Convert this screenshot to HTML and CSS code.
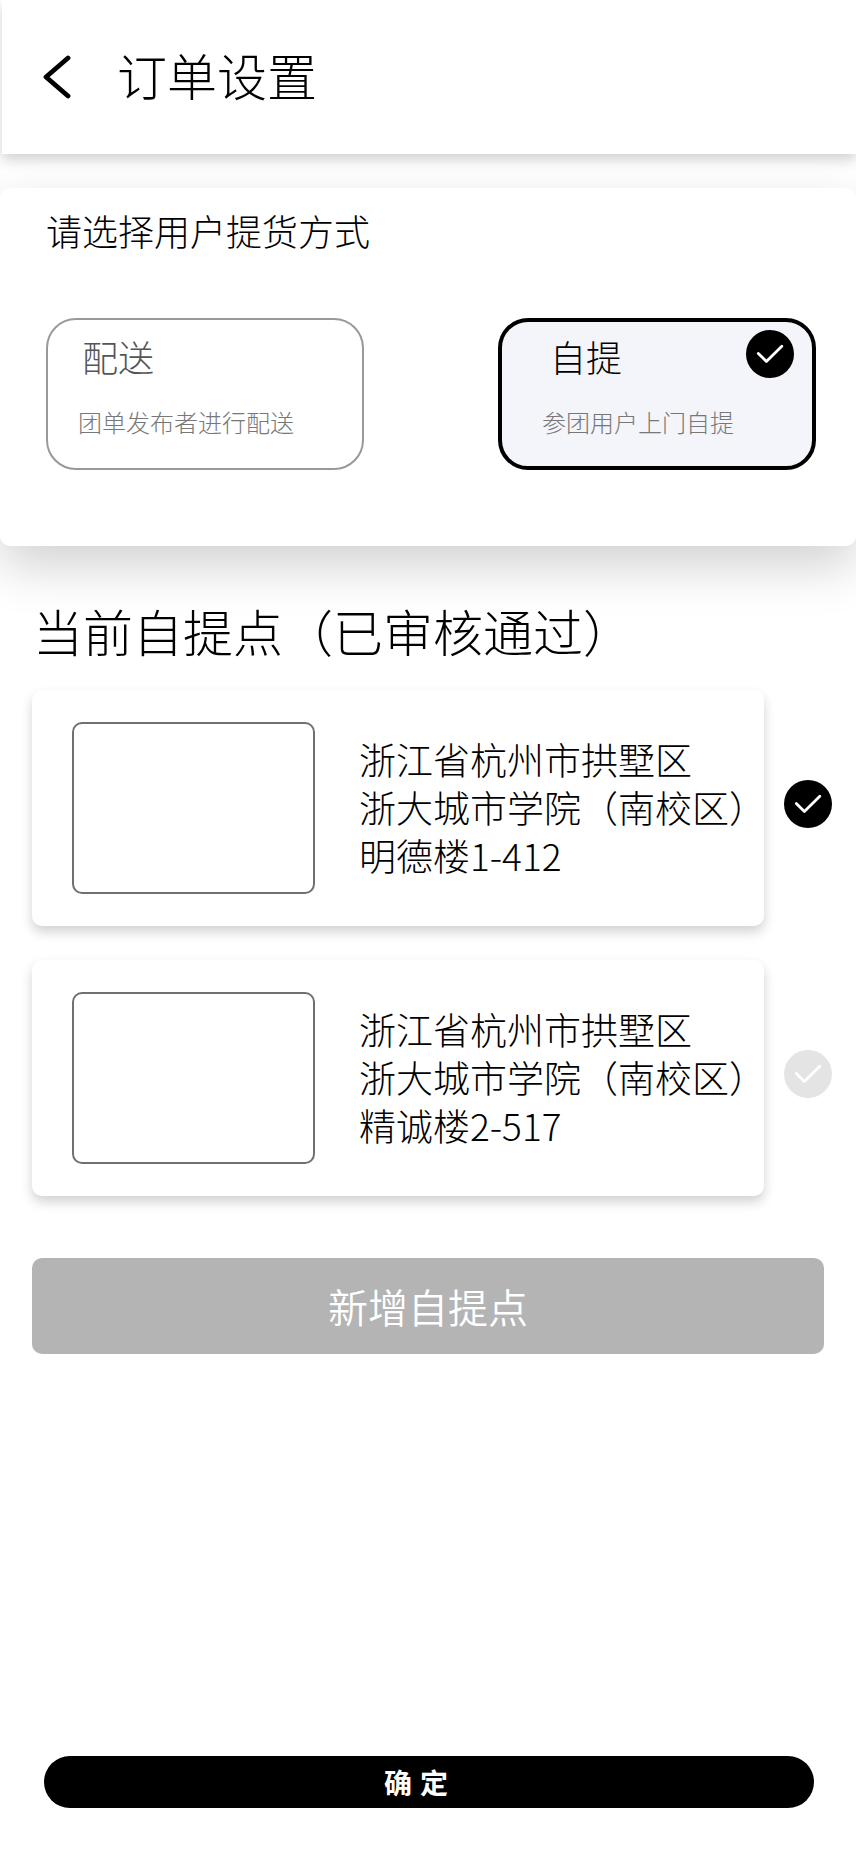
FILE: index.html
```
<!DOCTYPE html>
<html lang="zh-CN">
<head>
<meta charset="utf-8">
<meta name="viewport" content="width=device-width, initial-scale=1">
<title>订单设置</title>
<link rel="stylesheet" href="styles.css">
</head>
<body>
<svg class="defs" aria-hidden="true">
  <symbol id="tick" viewBox="0 0 48 48">
    <circle cx="24" cy="24" r="24" fill="currentColor"/>
    <path d="M12.3 23.4 20.4 31.5 35.8 16.3" fill="none" stroke="#fff" stroke-width="2.8" stroke-linecap="round" stroke-linejoin="round"/>
  </symbol>
</svg>
<header class="header">
  <button class="back" type="button" aria-label="返回">
    <svg class="back-icon" viewBox="0 0 28 44"><path d="M25 3 3 22 25 41" fill="none" stroke="#000" stroke-width="4.8" stroke-linecap="round" stroke-linejoin="round"/></svg>
  </button>
  <h1 class="title">订单设置</h1>
</header>
<main class="main">
  <section class="method">
    <h2 class="method-title" id="method-title">请选择用户提货方式</h2>
    <div class="options" role="radiogroup" aria-labelledby="method-title">
      <label class="option">
        <input class="radio" type="radio" name="method">
        <span class="option-name">配送</span>
        <span class="option-note">团单发布者进行配送</span>
      </label>
      <label class="option option-selected">
        <input class="radio" type="radio" name="method" checked>
        <span class="option-name">自提</span>
        <span class="option-note">参团用户上门自提</span>
        <svg class="tick option-tick"><use href="#tick"/></svg>
      </label>
    </div>
  </section>
  <section class="points">
    <h2 class="points-title">当前自提点（已审核通过）</h2>
    <label class="point">
      <input class="radio" type="radio" name="point" checked>
      <span class="card">
        <span class="thumb"></span>
        <span class="address">浙江省杭州市拱墅区<br>浙大城市学院（南校区）<br>明德楼1-412</span>
      </span>
      <svg class="tick point-tick"><use href="#tick"/></svg>
    </label>
    <label class="point">
      <input class="radio" type="radio" name="point">
      <span class="card">
        <span class="thumb"></span>
        <span class="address">浙江省杭州市拱墅区<br>浙大城市学院（南校区）<br>精诚楼2-517</span>
      </span>
      <svg class="tick point-tick tick-off"><use href="#tick"/></svg>
    </label>
    <button class="add" type="button">新增自提点</button>
  </section>
</main>
<button class="confirm" type="button">确 定</button>
</body>
</html>
```
FILE: styles.css
```
* {
  box-sizing: border-box;
}

body {
  display: flex;
  flex-direction: column;
  min-height: 100vh;
  margin: 0;
  padding-bottom: 44px;
  background: #fff;
  color: #000;
  font-family: "Noto Sans CJK SC", sans-serif;
  font-weight: 300;
}

h1,
h2 {
  margin: 0;
  font-weight: 300;
}

button {
  border: 0;
  padding: 0;
  font-family: inherit;
  font-weight: 350;
}

.defs {
  position: absolute;
  width: 0;
  height: 0;
}

.radio {
  position: absolute;
  opacity: 0;
}

.tick {
  flex: none;
  width: 48px;
  height: 48px;
  color: #000;
}

.tick-off {
  color: #e4e4e4;
}

.header {
  display: flex;
  align-items: center;
  gap: 46px;
  height: 154px;
  margin-left: 2px;
  padding-left: 41px;
  background: #fff;
  box-shadow: 0 6px 12px rgba(0, 0, 0, 0.18);
}

.back {
  display: flex;
  background: none;
}

.back-icon {
  width: 28px;
  height: 44px;
}

.title {
  padding-bottom: 6px;
  font-size: 50px;
  line-height: 72px;
}

.method {
  margin-top: 34px;
  padding: 18px 40px 76px 46px;
  border-radius: 10px;
  background: #fff;
  box-shadow: 0 20px 50px rgba(0, 0, 0, 0.18);
}

.method-title {
  font-size: 36px;
  line-height: 48px;
}

.options {
  display: flex;
  justify-content: space-between;
  gap: 24px;
  margin-top: 64px;
}

.option {
  position: relative;
  display: flex;
  flex-direction: column;
  gap: 24px;
  width: 318px;
  height: 152px;
  padding: 12px 30px;
  border: 2px solid #999;
  border-radius: 30px;
}

.option-name {
  padding-left: 4px;
  color: #555;
  font-size: 36px;
  line-height: 48px;
}

.option-note {
  color: #777;
  font-size: 24px;
  line-height: 36px;
}

.option-selected {
  padding: 10px 40px;
  border: 4px solid #000;
  background: #f4f5fb;
}

.option-selected .option-name {
  padding-left: 8px;
  color: #000;
}

.option-tick {
  position: absolute;
  top: 8px;
  right: 18px;
}

.points {
  padding: 48px 32px 0;
}

.points-title {
  margin-bottom: 24px;
  padding-left: 1px;
  font-size: 50px;
  line-height: 72px;
}

.point {
  display: flex;
  align-items: center;
  gap: 20px;
  margin-right: -8px;
  margin-bottom: 34px;
}

.card {
  display: flex;
  flex: 1;
  align-items: center;
  gap: 44px;
  min-width: 0;
  padding: 32px 0 32px 40px;
  border-radius: 10px;
  background: #fff;
  box-shadow: 0 6px 12px rgba(0, 0, 0, 0.18);
}

.thumb {
  flex: none;
  width: 243px;
  height: 172px;
  border: 2px solid #707070;
  border-radius: 10px;
}

.address {
  padding-bottom: 2px;
  font-size: 37px;
  line-height: 48px;
  white-space: nowrap;
}

.point-tick {
  margin-bottom: 8px;
}

.add {
  width: 100%;
  height: 96px;
  margin-top: 28px;
  border-radius: 10px;
  background: #b4b4b4;
  color: #fff;
  font-size: 40px;
}

.confirm {
  height: 52px;
  margin: auto 42px 0 44px;
  padding-right: 26px;
  border-radius: 26px;
  background: #000;
  color: #fff;
  font-family: "Liberation Sans", "Noto Sans CJK SC", sans-serif;
  font-size: 28px;
  font-weight: 700;
}
```
